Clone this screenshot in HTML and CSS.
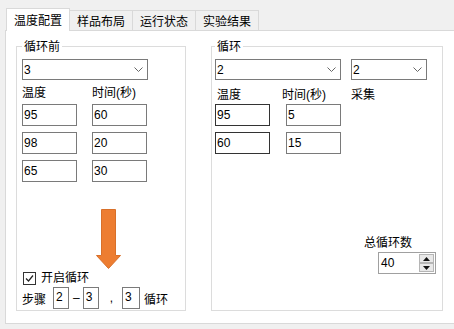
FILE: index.html
```html
<!DOCTYPE html>
<html>
  <head>
    <meta http-equiv="Content-Type" content="text/html;charset=utf-8" />
    <title>温度配置</title>
    <link rel="stylesheet" href="styles.css">
  </head>

  <body>
    <div class="tabs">
      <span class="tab active">温度配置</span>
      <span class="tab">样品布局</span>
      <span class="tab">运行状态</span>
      <span class="tab">实验结果</span>
    </div>
    <div class="panel">
      <fieldset class="group before">
        <legend>循环前</legend>
        <div class="combo wide">
          <span>3</span>
          <svg width="9" height="5"><polyline points="0.5,0.5 4.5,4.5 8.5,0.5" fill="none" stroke="#666" /></svg>
        </div>
        <div class="labels">
          <span class="cell">温度</span>
          <span class="cell">时间(秒)</span>
        </div>
        <div class="row first">
          <span class="cell"><span class="field">95</span></span>
          <span class="cell"><span class="field">60</span></span>
        </div>
        <div class="row">
          <span class="cell"><span class="field">98</span></span>
          <span class="cell"><span class="field">20</span></span>
        </div>
        <div class="row">
          <span class="cell"><span class="field">65</span></span>
          <span class="cell"><span class="field">30</span></span>
        </div>
        <svg class="arrow" width="26" height="62" viewBox="0 0 26 62">
          <path d="M5.5 1.5 H19.5 V47.5 H24.5 L12.5 60.5 L0.5 47.5 H5.5 Z" fill="#ed7d31" stroke="#d8702a" />
        </svg>
        <label class="check">
          <span class="box">
            <svg width="11" height="11"><polyline points="2,5.5 4.5,8 9,2.5" fill="none" stroke="#222" stroke-width="1.2" /></svg>
          </span>
          开启循环
        </label>
        <div class="steps">
          <span>步骤</span>
          <span class="small first">2</span>
          <span class="dash">–</span>
          <span class="small">3</span>
          <span class="comma">,</span>
          <span class="small wider">3</span>
          <span class="tail">循环</span>
        </div>
      </fieldset>

      <fieldset class="group cycle">
        <legend>循环</legend>
        <div class="combos">
          <div class="combo wide">
            <span>2</span>
            <svg width="9" height="5"><polyline points="0.5,0.5 4.5,4.5 8.5,0.5" fill="none" stroke="#666" /></svg>
          </div>
          <div class="combo narrow">
            <span>2</span>
            <svg width="9" height="5"><polyline points="0.5,0.5 4.5,4.5 8.5,0.5" fill="none" stroke="#666" /></svg>
          </div>
        </div>
        <div class="labels">
          <span class="cell temp">温度</span>
          <span class="cell time">时间(秒)</span>
          <span class="cell">采集</span>
        </div>
        <div class="row first">
          <span class="cell"><span class="field dark">95</span></span>
          <span class="cell"><span class="field">5</span></span>
        </div>
        <div class="row">
          <span class="cell"><span class="field dark">60</span></span>
          <span class="cell"><span class="field">15</span></span>
        </div>
        <div class="total">
          <span>总循环数</span>
          <div class="spin">
            <span class="value">40</span>
            <span class="buttons">
              <span class="btn"><svg width="7" height="4"><polygon points="3.5,0 7,4 0,4" fill="#111" /></svg></span>
              <span class="btn"><svg width="7" height="4"><polygon points="0,0 7,0 3.5,4" fill="#111" /></svg></span>
            </span>
          </div>
        </div>
      </fieldset>
    </div>
  </body>
</html>
```

FILE: styles.css
```css
body {
  margin: 0;
  background-color: #f0f0f0;
  font-family: "Liberation Sans", "Noto Sans CJK SC", sans-serif;
  font-size: 12px;
  color: #000;
  overflow: hidden;
}

/* tab strip */
.tabs {
  display: flex;
  align-items: flex-end;
  height: 30px;
  padding-left: 6px;
}

.tab {
  height: 19px;
  line-height: 19px;
  padding: 0 7px;
  border: 1px solid #d9d9d9;
  border-left: none;
  border-bottom: none;
  background-color: #f0f0f0;
  font-family: "Noto Sans CJK SC", sans-serif;
}

.tab.active {
  height: 22px;
  line-height: 21px;
  border-left: 1px solid #d9d9d9;
  background-color: #fff;
  margin-bottom: -1px;
  position: relative;
  z-index: 1;
}

.panel {
  display: flex;
  width: 470px;
  height: 294px;
  box-sizing: border-box;
  margin-left: 5px;
  padding: 7px 0 12px 10px;
  border: 1px solid #d9d9d9;
  background-color: #fff;
}

/* group boxes */
.group {
  display: flex;
  flex-direction: column;
  margin: 0;
  padding: 5px 0 1px 5px;
  border: 1px solid #dcdcdc;
  box-sizing: border-box;
  min-width: 0;
}

.group legend {
  padding: 0 2px;
  line-height: 16px;
  font-family: "Noto Sans CJK SC", sans-serif;
}

.before {
  width: 170px;
}

.cycle {
  width: 232px;
  margin-left: 25px;
  padding-left: 3px;
}

.combo {
  display: flex;
  align-items: center;
  justify-content: space-between;
  height: 21px;
  box-sizing: border-box;
  padding: 0 4px 0 1px;
  border: 1px solid #7a7a7a;
  background-color: #fff;
}

.combo.wide {
  width: 126px;
}

.combo.narrow {
  width: 76px;
  margin-left: 10px;
}

.combos {
  display: flex;
}

.labels {
  display: flex;
  margin-top: 5px;
  line-height: 16px;
}

.row {
  display: flex;
  margin-top: 6px;
}

.row.first {
  margin-top: 3px;
}

.cell {
  width: 70px;
}

.cycle .labels {
  margin-top: 7px;
}

.cycle .row.first {
  margin-top: 1px;
}

.cycle .cell {
  width: 71px;
}

.cycle .cell.temp {
  width: 65px;
  padding-left: 2px;
}

.cycle .cell.time {
  width: 69px;
}

.field {
  display: block;
  width: 55px;
  height: 22px;
  box-sizing: border-box;
  padding-left: 1px;
  line-height: 20px;
  border: 1px solid #7a7a7a;
}

.field.dark {
  border-color: #333;
}

.arrow {
  display: block;
  margin: auto 0 0 74px;
}

.check {
  display: flex;
  align-items: center;
  height: 16px;
  line-height: 16px;
}

.check .box {
  display: flex;
  align-items: center;
  justify-content: center;
  width: 13px;
  height: 13px;
  box-sizing: border-box;
  margin: 0 5px 0 1px;
  border: 1px solid #333;
}

.steps {
  display: flex;
  align-items: center;
  height: 22px;
  margin-top: 1px;
}

.small {
  width: 16px;
  height: 22px;
  box-sizing: border-box;
  padding-left: 2px;
  line-height: 18px;
  border: 1px solid #7a7a7a;
}

.small.first {
  margin-left: 7px;
}

.small.wider {
  width: 18px;
}

.dash {
  margin: 0 3px 0 4px;
}

.comma {
  margin: 0 9px 0 11px;
}

.tail {
  margin-left: 4px;
}

/* total cycle count */
.total {
  display: flex;
  flex-direction: column;
  align-self: flex-end;
  width: 72px;
  margin: auto 6px 35px 0;
  line-height: 16px;
}

.spin {
  display: flex;
  align-items: center;
  justify-content: space-between;
  width: 58px;
  height: 22px;
  box-sizing: border-box;
  margin: 1px 0 0 14px;
  padding: 0 1px 0 2px;
  border: 1px solid #a0a0a0;
}

.buttons {
  display: flex;
  flex-direction: column;
}

.btn {
  display: flex;
  align-items: center;
  justify-content: center;
  width: 15px;
  height: 9px;
  box-sizing: border-box;
  border: 1px solid #b5b5b5;
  background-color: #e8e8e8;
}
```
